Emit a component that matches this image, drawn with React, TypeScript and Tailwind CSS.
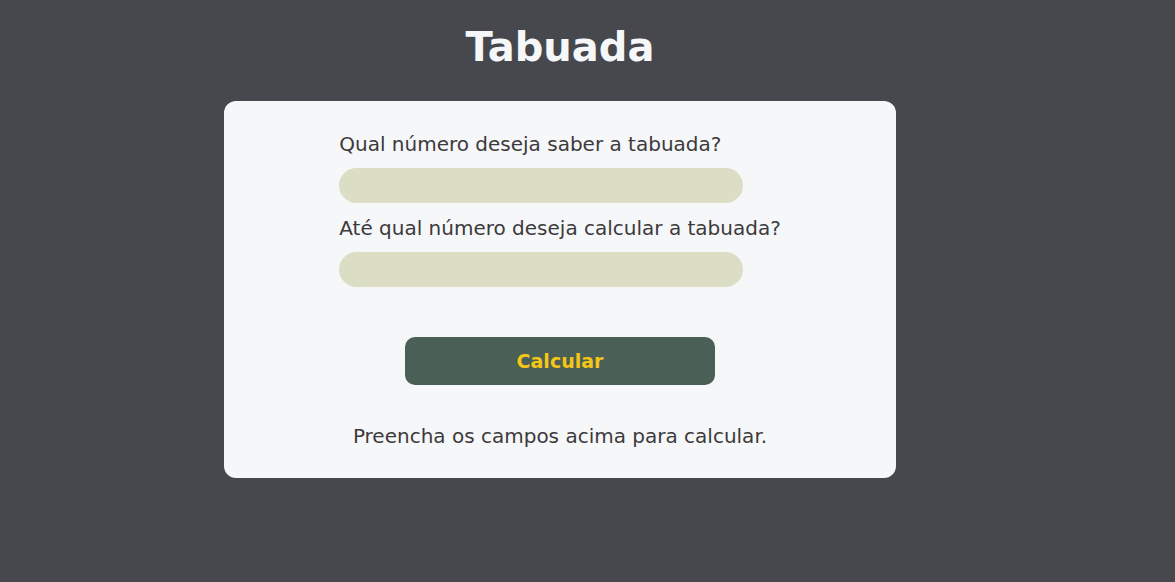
export default function App() {
  return (
    <div className="min-h-[582px] bg-[#47484d] font-['DejaVu_Sans',Verdana,sans-serif]">
      <div className="w-[1120px] flex flex-col items-center">
        <h1 className="mt-[24px] text-[40px] font-bold leading-[47px] text-[#f5f7f9]">Tabuada</h1>

        <div className="mt-[30px] w-[672px] rounded-[12px] bg-[#f5f7f9] pt-[32px] pb-[30px] flex flex-col items-center text-[#3d3a3b]">
          <form className="flex flex-col items-start">
            <label className="text-[20px] leading-[23px]">Qual número deseja saber a tabuada?</label>
            <input type="text" className="mt-[12px] h-[35px] w-[404px] rounded-full bg-[#dbdec4] outline-none px-4" />
            <label className="mt-[14px] text-[20px] leading-[23px]">Até qual número deseja calcular a tabuada?</label>
            <input type="text" className="mt-[12px] h-[35px] w-[404px] rounded-full bg-[#dbdec4] outline-none px-4" />
          </form>

          <button className="mt-[50px] h-[48px] w-[310px] rounded-[10px] bg-[#4a5f56] text-[19px] font-bold text-[#f5c518]">
            Calcular
          </button>

          <p className="mt-[40px] text-[20px] leading-[23px]">Preencha os campos acima para calcular.</p>
        </div>
      </div>
    </div>
  )
}
